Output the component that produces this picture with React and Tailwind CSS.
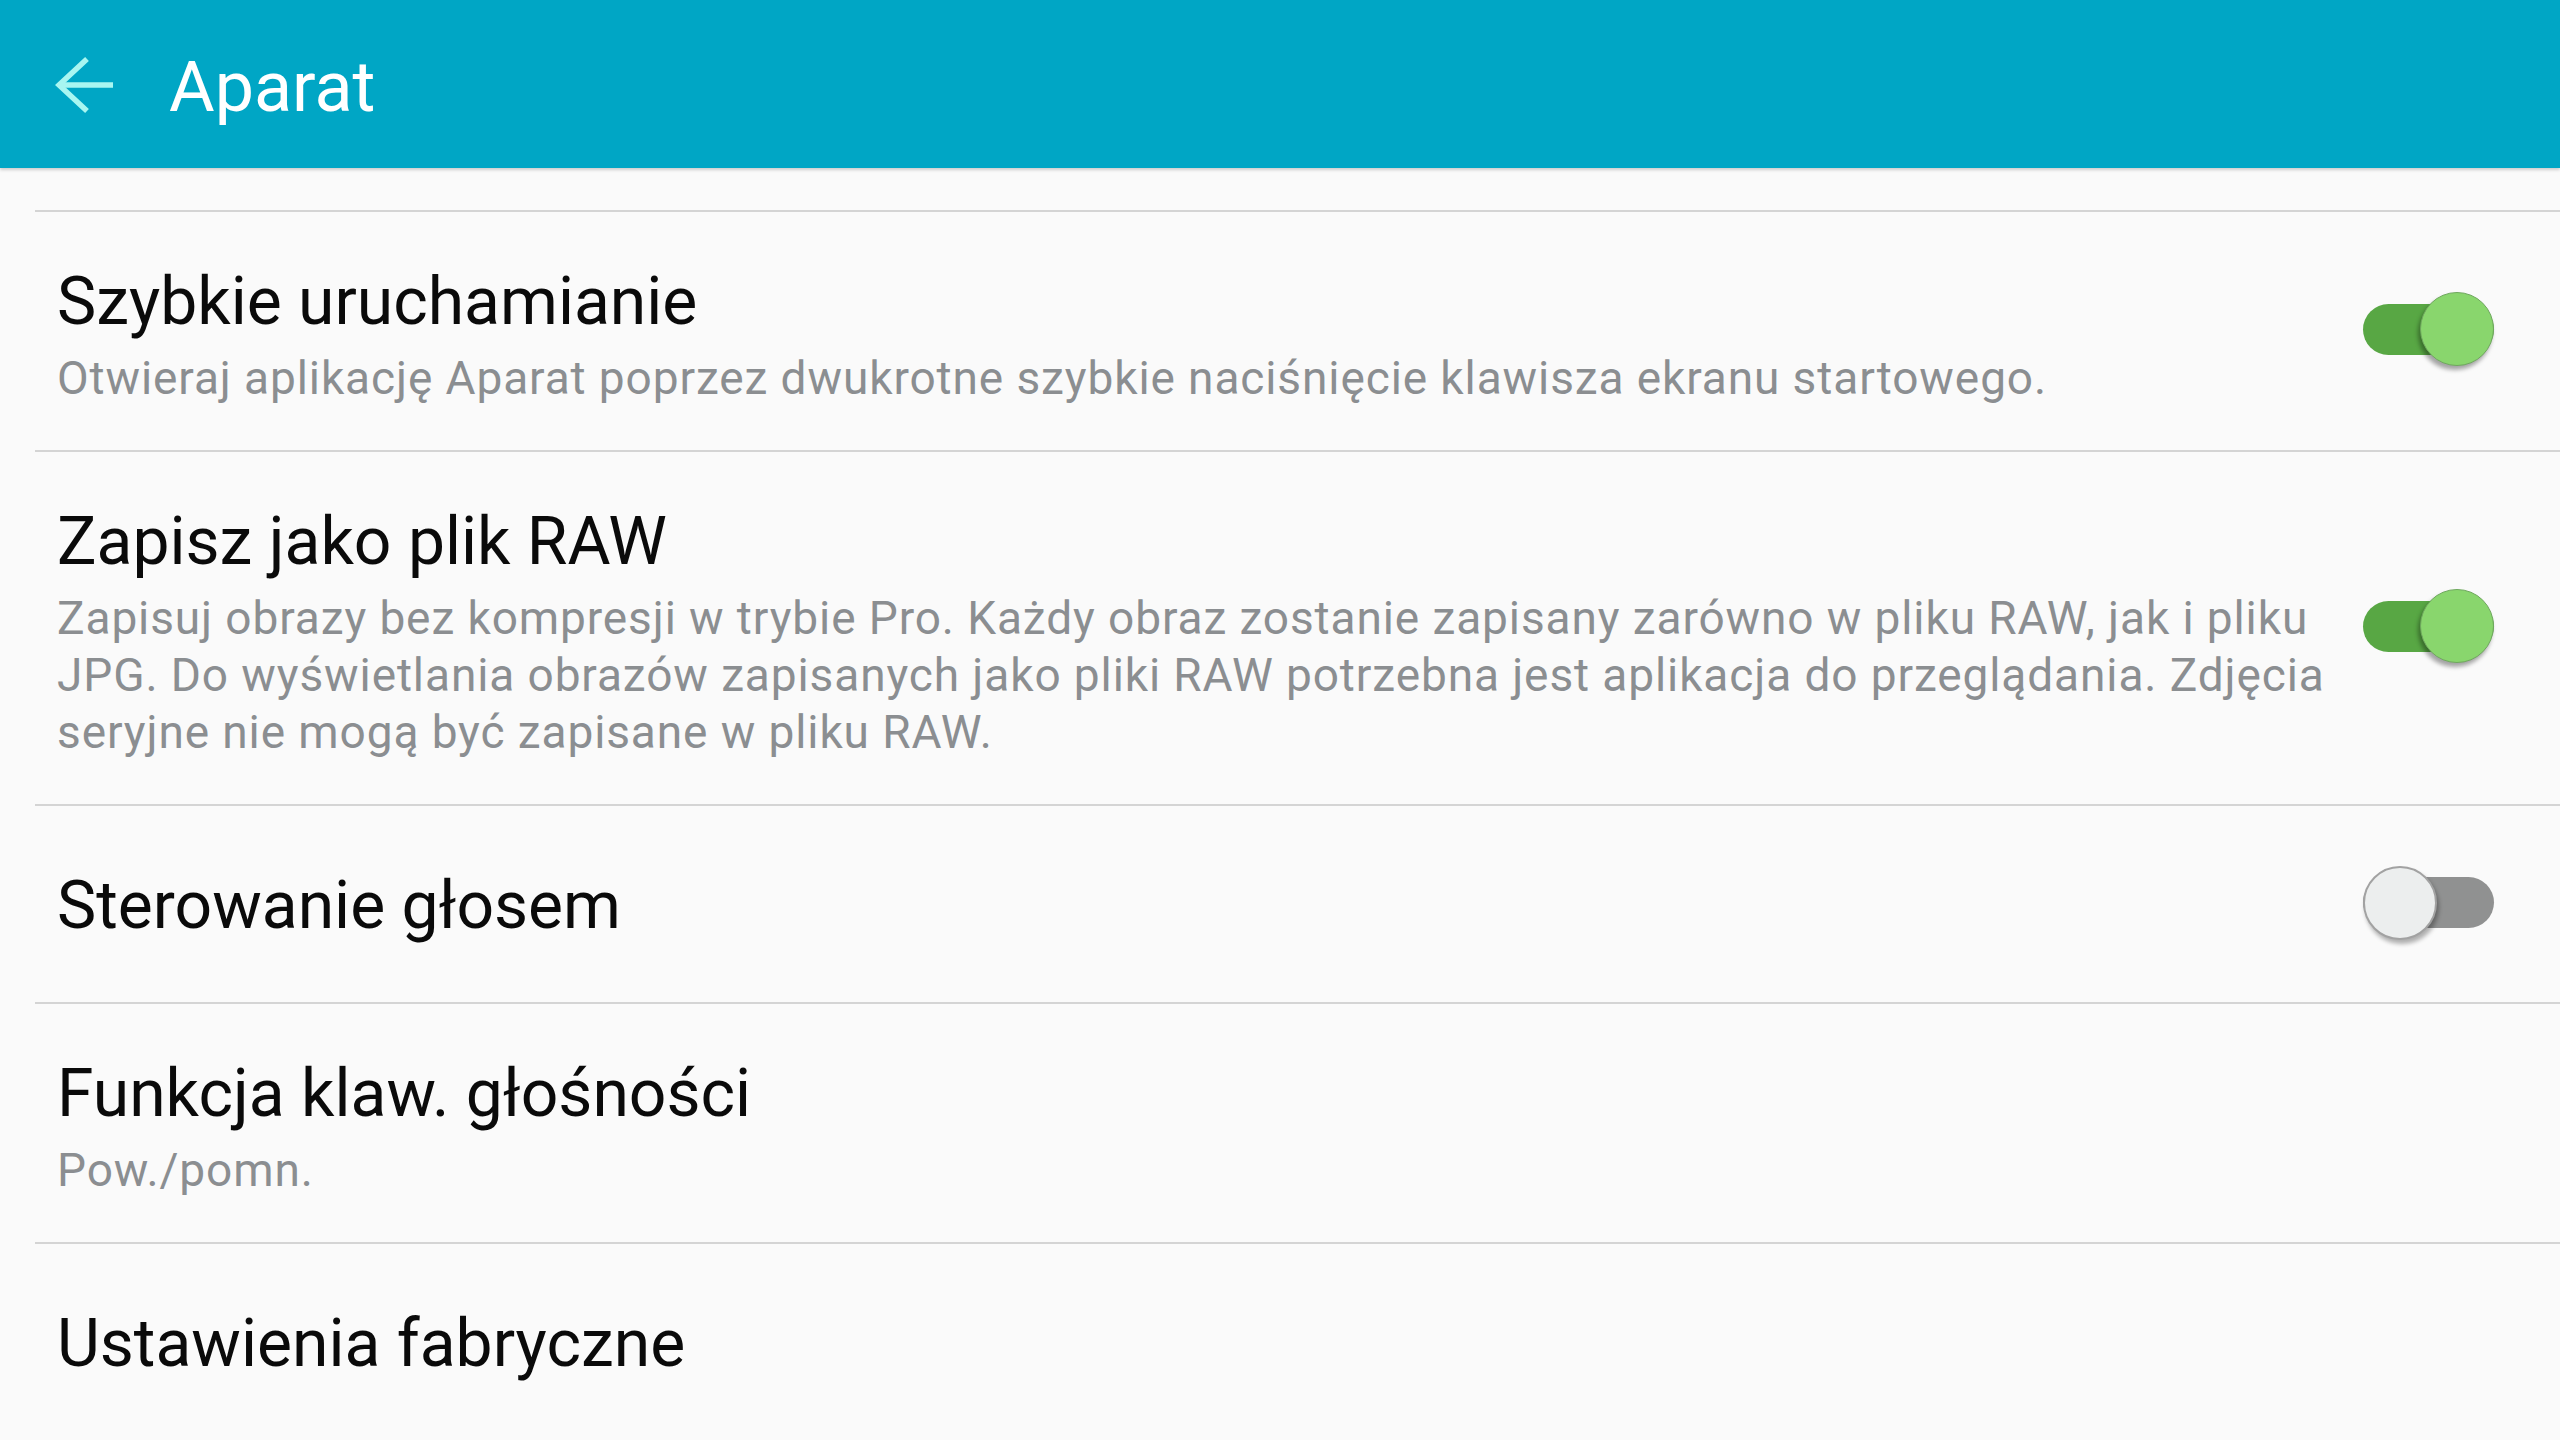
import React from "react";

function Toggle({ on }) {
  return (
    <div className="relative w-[131px] h-[74px] flex items-center shrink-0">
      <div
        className={
          "w-[131px] h-[51px] rounded-full " + (on ? "bg-[#58a744]" : "bg-[#909191]")
        }
      />
      {on ? (
        <div className="absolute right-0 top-0 w-[74px] h-[74px] rounded-full bg-[#89d66d] border border-[#6fa85e] shadow-[-2px_4px_4px_rgba(0,0,0,0.35)]" />
      ) : (
        <div className="absolute left-0 top-0 w-[74px] h-[74px] rounded-full bg-[#eceeee] border-2 border-[#a2a2a2] shadow-[2px_4px_4px_rgba(0,0,0,0.3)]" />
      )}
    </div>
  );
}

function Row({ title, sub, toggle }) {
  const hasSub = sub !== undefined;
  return (
    <div
      className={
        "border-t-2 border-[#d4d4d4] flex items-center pl-[22px] pr-[66px] " +
        (hasSub ? "pt-[50px] pb-[43px]" : "h-[198px] pt-[3px]")
      }
    >
      <div className="flex-1 min-w-0">
        <div className="text-[66px] leading-[80px] text-[#0a0a0a]">{title}</div>
        {hasSub && (
          <div className="mt-[8px] text-[46px] leading-[57px] tracking-[0.9px] text-[#8b8e91]">{sub}</div>
        )}
      </div>
      {toggle !== undefined && (
        <div className={"ml-[20px] " + (hasSub ? "mb-[11px]" : "mb-[6px]")}>
          <Toggle on={toggle} />
        </div>
      )}
    </div>
  );
}

export default function App() {
  return (
    <div
      className="w-[2560px] h-[1440px] bg-[#fafafa] overflow-hidden"
      style={{ fontFamily: "Roboto, 'Noto Sans', sans-serif" }}
    >
      <div className="h-[168px] pt-[6px] bg-[#00a6c5] flex items-center shadow-[0_2px_3px_rgba(0,0,0,0.18)] relative z-10">
        <svg
          className="ml-[55px] w-[60px] h-[60px]"
          viewBox="0 0 60 60"
          fill="none"
          stroke="#a8f6f1"
          strokeWidth="5.5"
        >
          <path d="M3 28 H58" />
          <path d="M32 2 L4 28 L32 54" strokeLinejoin="miter" />
        </svg>
        <div className="ml-[54px] text-[70px] text-white leading-none">Aparat</div>
      </div>
      <div className="h-[42px]" />
      <div className="ml-[35px]">
        <Row
          title="Szybkie uruchamianie"
          sub="Otwieraj aplikację Aparat poprzez dwukrotne szybkie naciśnięcie klawisza ekranu startowego."
          toggle={true}
        />
        <Row
          title="Zapisz jako plik RAW"
          sub={
            <>
              Zapisuj obrazy bez kompresji w trybie Pro. Każdy obraz zostanie zapisany zarówno w pliku RAW, jak i pliku
              <br />
              JPG. Do wyświetlania obrazów zapisanych jako pliki RAW potrzebna jest aplikacja do przeglądania. Zdjęcia
              <br />
              seryjne nie mogą być zapisane w pliku RAW.
            </>
          }
          toggle={true}
        />
        <Row title="Sterowanie głosem" toggle={false} />
        <Row title="Funkcja klaw. głośności" sub="Pow./pomn." />
        <Row title="Ustawienia fabryczne" />
      </div>
    </div>
  );
}
